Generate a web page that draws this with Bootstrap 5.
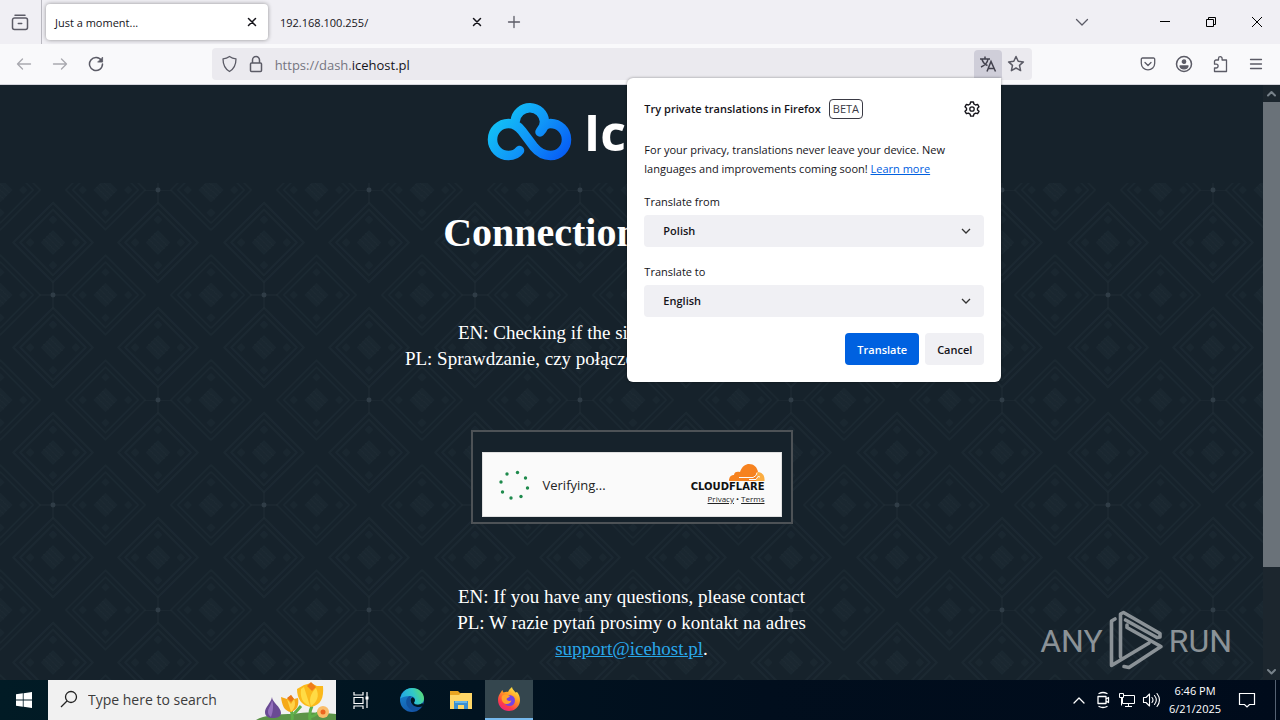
<!DOCTYPE html>
<html lang="en">
<head>
<meta charset="utf-8">
<meta name="viewport" content="width=device-width, initial-scale=1">
<title>Just a moment...</title>
<link href="https://cdn.jsdelivr.net/npm/bootstrap@5.3.0/dist/css/bootstrap.min.css" rel="stylesheet">
<style>
body { font: 11px/19px "Open Sans", "Noto Sans", sans-serif; color: #15141a; background: #16222b; }
button { font: inherit; color: inherit; background: none; border: 0; padding: 0; }
svg { display: block; flex: none; }
.ln { fill: none; stroke: currentColor; stroke-width: 1.3; stroke-linecap: round; stroke-linejoin: round; }
.ico { color: #5b5b66; }

/* tab strip */
.tabstrip { height: 44px; background: #f0eff4; }
.view-btn { width: 42px; padding-right: 2px; border-right: 1px solid #b9b8c0; }
.tab { width: 225px; height: 36px; padding: 0 8px 0 12px; }
.tab.current { width: 222px; padding: 0 8px 0 9px; background: #fff; border-radius: 4px; box-shadow: 0 0 4px rgba(0,0,0,.4); }
.tab-x, .tab-new { width: 16px; height: 16px; }
.tab-new { margin-left: 13px; }
.win-btn { width: 46px; height: 44px; }

/* toolbar */
.toolbar { height: 41px; background: #f9f9fb; border-bottom: 1px solid #d5d5dc; padding: 0 6px; }
.tool { width: 36px; height: 36px; }
.spring { flex: 12 1 0; }
.urlbar { flex: 100 1 0; min-width: 0; height: 32px; padding: 0 2px 0 5px; background: #ebeaef; border-radius: 4px; }
.url-field { font-size: 13px; line-height: 20px; padding: 2px 0 0 2px; color: #75757f; text-decoration: none; }
.url-field b { color: #15141a; font-weight: 400; }
.url-btn { width: 28px; height: 28px; }
.url-btn.open { background: #cfced9; border-radius: 4px 4px 0 0; }

/* translation panel */
.panel { position: absolute; top: 100%; right: 1px; z-index: 10; width: 374px; padding: 16px 17px 17px; background: #fff; border-radius: 6px 0 6px 6px; box-shadow: 0 0 3px rgba(0,0,0,.4); }
.panel-head { height: 30px; margin-bottom: 16px; }
.panel h2 { font-size: 11px; line-height: 20px; font-weight: 600; }
.beta { font-size: 11px; line-height: 18px; padding: 0 3px; border: 1px solid #3a3a44; border-radius: 4px; color: #3a3a44; }
.panel a { color: #0060df; }
.panel p { margin-bottom: 14px; }
.panel .field { margin-bottom: 15px; }
.panel .form-select { height: 32px; padding: 0 32px 0 15px; border: 0; border-radius: 4px; font-size: 11px; font-weight: 600; color: #15141a; background-color: #f0f0f4; background-position: right 12px center; background-size: 12px; background-image: url("data:image/svg+xml,%3Csvg xmlns='http://www.w3.org/2000/svg' viewBox='0 0 12 12'%3E%3Cpath d='M2 4l4 4 4-4' fill='none' stroke='%23333' stroke-width='1.3'/%3E%3C/svg%3E"); text-indent: 4px; }
.panel-actions { gap: 6px; padding-top: 1px; }
.panel-btn { height: 32px; padding: 0 12px; border-radius: 4px; background: #f0f0f4; font-weight: 600; }
.panel-btn.go { background: #0061e0; color: #fff; }

/* web page */
.site { color: #fff; font: 19px/26px "Liberation Serif", serif; background: #16222b; min-height: 0; }
.site-head { height: 98px; padding-top: 2px; }
.site-name { font: 700 50px/58px "Open Sans", sans-serif; padding-right: 8px; }
.site-body { padding-top: 27px; background: url("data:image/svg+xml,%3Csvg xmlns='http://www.w3.org/2000/svg' xmlns:xlink='http://www.w3.org/1999/xlink' viewBox='0 0 212 212'%3E%3Cdefs%3E%3Cg id='d'%3E%3Cg fill='none' stroke='%231b2831' stroke-width='1.5'%3E%3Cpath d='M0-40L40 0 0 40-40 0z'/%3E%3Cpath d='M0-33L33 0 0 33-33 0z'/%3E%3C/g%3E%3Cpath fill='%231a2730' d='M0-12L12 0 0 12-12 0zM0-27l4 4-4 4-4-4zM0 19l4 4-4 4-4-4zM-23-4l4 4-4 4-4-4zM23-4l4 4-4 4-4-4z'/%3E%3Cpath d='M-6-6L6 6M-9-3L3 9M-3-9L9 3' stroke='%23202d36' stroke-dasharray='1 1'/%3E%3C/g%3E%3Cg id='r'%3E%3Cuse xlink:href='%23d'/%3E%3Cuse xlink:href='%23d' x='106'/%3E%3Cuse xlink:href='%23d' x='212'/%3E%3C/g%3E%3C/defs%3E%3Cuse xlink:href='%23r'/%3E%3Cuse xlink:href='%23r' y='106'/%3E%3Cuse xlink:href='%23r' y='212'/%3E%3Cuse xlink:href='%23r' x='53' y='53'/%3E%3Cuse xlink:href='%23r' x='53' y='159'/%3E%3Cuse xlink:href='%23r' x='-53' y='53'/%3E%3Cuse xlink:href='%23r' x='-53' y='159'/%3E%3Cg stroke='%231f2c35'%3E%3Cpath d='M39 106h28M53 92v28M145 0h28M159 0v14M159 198v14'/%3E%3C/g%3E%3Cg fill='%232f3c46'%3E%3Ccircle cx='53' cy='106' r='2.5'/%3E%3Ccircle cx='159' cy='0' r='2.5'/%3E%3Ccircle cx='159' cy='212' r='2.5'/%3E%3C/g%3E%3C/svg%3E") 0 7px / 211px 210px; }
.site-body h1 { font-size: 40px; line-height: 46px; font-weight: 700; margin: 0 0 64px; }
.challenge { width: 322px; height: 94px; margin: 58px auto 60px; padding: 20px 9px 5px; border: 2px solid #4d5256; background: #16222b; }
.widget { height: 65px; background: #fafafa; border: 1px solid #e0e0e0; color: #232323; padding: 0 16px; font: 13px/20px "Open Sans", sans-serif; }
.cf-name { font: 700 10px/12px "DejaVu Sans", sans-serif; color: #111; }
.cf-links { font-size: 8px; line-height: 12px; }
.cf-links a { color: #232323; }
.site-body p a { color: #29a8ea; }
.watermark { position: absolute; right: 48px; bottom: 7px; color: #8b9297; font: 32px/62px Roboto, "Liberation Sans", sans-serif; gap: 4px; }

.scroll { width: 17px; background: #1c262e; color: #78828a; }
.scroll-thumb { height: 465px; background: #6a7279; }

/* taskbar */
.taskbar { height: 40px; color: #fff; background: linear-gradient(90deg, #011b25, #010e1d 60%, #000b1b); line-height: 18px; }
.start { width: 48px; }
.search { width: 288px; background: #f1f1f1; }
.search input { flex: 1; width: 100px; border: 0; background: none; font-size: 14px; padding: 0; outline: 0; }
.search input::placeholder { color: #3c3c3c; opacity: 1; }
.app { width: 49px; height: 40px; }
.app.view { width: 49px; margin-right: 2px; }
.app.running { width: 48px; background: #34464e; border-bottom: 2px solid #76b9ed; }
.tray-btn { width: 24px; height: 40px; }
.clock { width: 64px; }
.notify { width: 40px; height: 40px; }
.peek { width: 5px; border-left: 1px solid #566273; }
</style>
</head>
<body class="vh-100 d-flex flex-column overflow-hidden">

<header>
  <div class="tabstrip d-flex align-items-center">
    <button class="view-btn ico h-100 d-flex align-items-center justify-content-center" aria-label="Firefox View">
      <svg class="ln" width="18" height="18" viewBox="0 0 18 18"><path d="M4 2.200h10M3.500 5h11a2 2 0 0 1 2 2v7.500a2 2 0 0 1-2 2h-11a2 2 0 0 1-2-2V7a2 2 0 0 1 2-2zM7.300 10.500h3.400" stroke-width="1.5"/></svg>
    </button>
    <div class="tab current ms-1 d-flex align-items-center justify-content-between">
      <span>Just a moment...</span>
      <button class="tab-x" aria-label="Close tab"><svg class="ln" width="16" height="16" viewBox="0 0 16 16"><path d="M4.500 4.500l7 7M11.500 4.500l-7 7" stroke-width="1.5"/></svg></button>
    </div>
    <div class="tab d-flex align-items-center justify-content-between">
      <span>192.168.100.255/</span>
      <button class="tab-x" aria-label="Close tab"><svg class="ln" width="16" height="16" viewBox="0 0 16 16"><path d="M4.500 4.500l7 7M11.500 4.500l-7 7" stroke-width="1.5"/></svg></button>
    </div>
    <button class="tab-new ico me-auto" aria-label="New tab"><svg class="ln" width="16" height="16" viewBox="0 0 16 16"><path d="M8 2.500v11M2.500 8h11"/></svg></button>
    <button class="ico me-5 d-flex align-items-center" aria-label="List all tabs"><svg class="ln" width="24" height="16" viewBox="0 0 24 16"><path d="M6.500 5.500L12 11l5.500-5.500"/></svg></button>
    <button class="win-btn d-flex align-items-center justify-content-center" aria-label="Minimize"><svg width="12" height="12" viewBox="0 0 12 12"><path d="M1 5.500h10" stroke="#000"/></svg></button>
    <button class="win-btn d-flex align-items-center justify-content-center" aria-label="Restore"><svg width="12" height="12" viewBox="0 0 12 12" fill="none" stroke="#000"><path d="M1.500 3.500h7v7h-7zM3.500 3.500v-2h7v7h-2"/></svg></button>
    <button class="win-btn d-flex align-items-center justify-content-center" aria-label="Close"><svg width="12" height="12" viewBox="0 0 12 12"><path d="M1 1l10 10M11 1L1 11" stroke="#000"/></svg></button>
  </div>

  <nav class="toolbar d-flex align-items-center" aria-label="Navigation">
    <button class="tool ico opacity-50 d-flex align-items-center justify-content-center" aria-label="Back"><svg class="ln" width="16" height="16" viewBox="0 0 16 16"><path d="M14.500 8h-13M6.500 3L1.500 8l5 5"/></svg></button>
    <button class="tool ico opacity-50 d-flex align-items-center justify-content-center" aria-label="Forward"><svg class="ln" width="16" height="16" viewBox="0 0 16 16"><path d="M1.500 8h13M9.500 3l5 5-5 5"/></svg></button>
    <button class="tool ico d-flex align-items-center justify-content-center" aria-label="Reload"><svg class="ln" width="16" height="16" viewBox="0 0 16 16"><path d="M13.500 4.600A6.500 6.500 0 1 0 14.500 8" stroke-width="1.5"/><path d="M14.600 1.500v4.600h-4.600z" fill="currentColor" stroke-width=".8"/></svg></button>
    <div class="spring"></div>
    <div class="urlbar d-flex align-items-center">
      <div class="d-flex align-items-center ico ps-1 pe-2 gap-2">
        <svg class="ln" width="18" height="18" viewBox="0 0 18 18"><path d="M8.500 1.500c2 1.500 4 2.200 6.500 2.300 0 6-2 10.200-6.500 12.700C4 14 2 9.800 2 3.800c2.500-.1 4.500-.8 6.500-2.300z"/></svg>
        <svg class="ln" width="18" height="18" viewBox="0 0 18 18"><path d="M4.500 8h9a1 1 0 0 1 1 1v6.500a1 1 0 0 1-1 1h-9a1 1 0 0 1-1-1V9a1 1 0 0 1 1-1zM5.500 8V5a3.500 3.500 0 0 1 7 0v3" stroke-width="1.5"/></svg>
      </div>
      <a class="url-field me-auto" href="https://dash.icehost.pl">https://dash.<b>icehost.pl</b></a>
      <div class="position-relative">
        <button class="url-btn open d-flex align-items-center justify-content-center" aria-label="Translate this page">
          <svg width="18" height="18" viewBox="0 0 18 18" fill="none" stroke="#42414d" stroke-width="1.500"><path d="M1 4h10M6 1.500V4M9 4C8.500 7.500 5.500 10.500 2 12M3 4.500C4 7.500 6 9.500 8.500 10.500M8 16.500l4-10 4.500 10M9.500 13.500h5.500"/></svg>
        </button>
        <section class="panel" aria-label="Translations">
          <div class="panel-head d-flex align-items-center pe-1">
            <h2 class="mb-0 me-2">Try private translations in Firefox</h2>
            <span class="beta">BETA</span>
            <button class="ms-auto" aria-label="Translation settings"><svg class="ln" width="16" height="16" viewBox="0 0 16 16"><path d="M6.600 1h2.800l.5 2 1.700 1 2-.6 1.400 2.400L13.500 7.200v1.700l1.500 1.400-1.400 2.400-2-.6-1.700 1-.5 2H6.600l-.5-2-1.700-1-2 .6L1 10.300l1.500-1.400V7.200L1 5.800l1.400-2.400 2 .6 1.700-1z" stroke-width="1.400"/><circle cx="8" cy="8" r="2.200"/></svg></button>
          </div>
          <p>For your privacy, translations never leave your device. New<br>languages and improvements coming soon! <a href="#">Learn more</a></p>
          <div class="field">
            <label class="d-block mb-1" for="from">Translate from</label>
            <select class="form-select" id="from"><option>Polish</option></select>
          </div>
          <div class="field">
            <label class="d-block mb-1" for="to">Translate to</label>
            <select class="form-select" id="to"><option>English</option></select>
          </div>
          <div class="panel-actions d-flex justify-content-end">
            <button class="panel-btn go">Translate</button>
            <button class="panel-btn">Cancel</button>
          </div>
        </section>
      </div>
      <button class="url-btn ico d-flex align-items-center justify-content-center" aria-label="Bookmark this page"><svg class="ln" width="18" height="18" viewBox="0 0 18 18"><path d="M9 1.500l2.200 4.800 5.200.6-3.900 3.500 1.100 5.200L9 13l-4.600 2.600 1.100-5.200L1.600 6.900l5.200-.6z" stroke-width="1.500"/></svg></button>
    </div>
    <div class="spring"></div>
    <button class="tool ico d-flex align-items-center justify-content-center" aria-label="Save to Pocket"><svg class="ln" width="16" height="16" viewBox="0 0 16 16"><path d="M2.500 2h11a1.200 1.200 0 0 1 1.200 1.200v4a6.700 6.700 0 0 1-13.400 0v-4A1.200 1.200 0 0 1 2.500 2zM5 6.500l3 3 3-3"/></svg></button>
    <button class="tool ico d-flex align-items-center justify-content-center" aria-label="Account"><svg class="ln" width="18" height="18" viewBox="0 0 18 18"><circle cx="9" cy="9" r="7.500" stroke-width="1.500"/><circle cx="9" cy="6.700" r="1.700" fill="currentColor"/><path d="M5 11h8c-.5 1.700-2.100 2.800-4 2.800S5.500 12.700 5 11z" fill="currentColor"/></svg></button>
    <button class="tool ico d-flex align-items-center justify-content-center" aria-label="Extensions"><svg class="ln" width="18" height="18" viewBox="0 0 18 18"><path d="M7.500 5V3.500a1.800 1.800 0 0 1 3.600 0V5h4.400v11.500H3.500V13h1.700a1.900 1.900 0 0 0 0-3.800H3.500V6.500a1.500 1.500 0 0 1 1.500-1.500z"/></svg></button>
    <button class="tool ico d-flex align-items-center justify-content-center" aria-label="Menu"><svg class="ln" width="16" height="16" viewBox="0 0 16 16"><path d="M2.500 3.500h11M2.500 8h11M2.500 12.500h11"/></svg></button>
  </nav>
</header>

<div class="site flex-grow-1 d-flex position-relative">
  <main class="flex-grow-1 d-flex flex-column text-center overflow-hidden">
    <div class="site-head d-flex justify-content-center gap-2">
      <svg width="92" height="88" viewBox="0 0 92 88" fill="none"><defs><linearGradient id="ice" gradientUnits="userSpaceOnUse" x1="20" y1="20" x2="78" y2="70"><stop stop-color="#12c3f5"/><stop offset=".5" stop-color="#1097f8"/><stop offset="1" stop-color="#075ff5"/></linearGradient></defs>
        <path d="M35.500 63.500C33 67 29 68.500 24.500 68.500A16 16 0 0 1 24.500 36.500C31 36.500 35 40 38 44L50 60C55 66 60 68.500 66.500 68.500A16 16 0 0 0 66.500 36.500C62 36.500 59 39 56.500 44M56 45C59 42 60.500 39 60.500 34.500A14.700 14.700 0 0 0 31.200 34" stroke="url(#ice)" stroke-width="9.500" stroke-linecap="round" stroke-linejoin="round"/>
      </svg>
      <span class="site-name pt-3">IceHost</span>
    </div>
    <div class="site-body flex-grow-1">
      <h1>Connection validation</h1>
      <p class="mb-0">EN: Checking if the site connection is secure.<br>PL: Sprawdzanie, czy połączenie z witryną jest bezpieczne.</p>
      <div class="challenge">
        <div class="widget d-flex align-items-center">
          <svg width="32" height="32" viewBox="0 0 32 32" fill="#1e8a4c"><circle cx="18.500" cy="3.500" r="1.700"/><circle cx="26.500" cy="9" r="1.700"/><circle cx="28.500" cy="19" r="1.700"/><circle cx="22" cy="27.500" r="1.700"/><circle cx="12" cy="29" r="1.700"/><circle cx="3.500" cy="23" r="1.700"/><circle cx="2" cy="13" r="1.700"/><circle cx="8" cy="5" r="1.700"/></svg>
          <span class="ms-2 ps-1">Verifying...</span>
          <div class="ms-auto text-end d-flex flex-column align-items-end">
            <svg width="36" height="17" viewBox="0 0 36 17"><path fill="#f6821f" d="M0 17c0-4 2-6 5-6 0-3 3-4 6-3C13 2 17 0 20 0c5 0 8 3 9 8 1 3 0 6-1 9z"/><path fill="#fbad41" d="M27 17c1-3 1-6 1-9 5 0 8 3 7.500 9z"/><path d="M10 13.500h14l3-2 1-3M20 15.500h7l2-3 2 .5" fill="none" stroke="#fafafa" stroke-width="1"/></svg>
            <span class="cf-name">CLOUDFLARE</span>
            <span class="cf-links"><a href="#">Privacy</a> • <a href="#">Terms</a></span>
          </div>
        </div>
      </div>
      <p class="mb-0">EN: If you have any questions, please contact<br>PL: W razie pytań prosimy o kontakt na adres<br><a href="mailto:support@icehost.pl">support@icehost.pl</a>.</p>
    </div>
  </main>
  <div class="scroll d-flex flex-column align-items-center" aria-hidden="true">
    <svg class="ln" width="17" height="17" viewBox="0 0 17 17"><path d="M5 10.500L8.500 7l3.500 3.500" stroke-width="2"/></svg>
    <div class="scroll-thumb w-100"></div>
    <svg class="ln mt-auto" width="17" height="17" viewBox="0 0 17 17"><path d="M5 7l3.500 3.500L12 7" stroke-width="2"/></svg>
  </div>
  <div class="watermark d-flex align-items-center">
    <span>ANY</span>
    <svg width="58" height="64" viewBox="0 0 58 64" fill="none" stroke="#8b9297" stroke-width="3.600" stroke-linecap="round" stroke-linejoin="round"><path d="M8 10l-3.500 2v44.500L42 34M13.500 48V5l3-1.500L53 24.500v3.500l-3 .500L18.500 11M20 18.500l34 19L22 58.500l-5-1M20 18.500V16"/></svg>
    <span>RUN</span>
  </div>
</div>

<footer class="taskbar d-flex align-items-stretch">
  <button class="start d-flex align-items-center justify-content-center" aria-label="Start"><svg width="16" height="16" viewBox="0 0 16 16" fill="#fff"><path d="M0 2.300l6.800-1v6.300H0zM7.600 1.200L16 0v7.600H7.600zM0 8.400h6.800v6.300L0 13.700zM7.600 8.400H16V16l-8.400-1.200z"/></svg></button>
  <label class="search d-flex align-items-center ps-2">
    <svg class="ms-1 me-2" width="20" height="20" viewBox="0 0 20 20" fill="none" stroke="#222" stroke-width="1.300"><circle cx="11" cy="7" r="5.500"/><path d="M7 11l-6 6"/></svg>
    <input type="text" placeholder="Type here to search" aria-label="Search">
    <svg class="align-self-end" width="80" height="38" viewBox="0 0 80 38"><path fill="#5c9448" d="M0 38c8-5 22-6 38-6 15-3 30-1 42 0v6z"/><g stroke="#5faf4a" stroke-width="3" fill="none"><path d="M36 38c1-4 0-8-2-12M54 38c-1-6 0-10 2-14M54 35c7-2 10-5 11-9M38 32l7-8"/></g><path fill="#6a4a94" d="M16 15c0 5 9 10 9 16 0 4-4 5-8 5-5 0-8-2-8-6 0-5 6-9 7-15z"/><path fill="#9470bd" d="M16 18c-1 6-4 8-4 12 0 3 2 4 3 5 2-5 3-12 1-17z"/><path fill="#f5a917" d="M25 15l6 2 4-4 3 4 4-1c1 6 0 12-7 14-7-1-9-7-10-15z"/><path fill="#ffd34a" d="M31 17l4 13c4-4 5-8 3-13l-3 5z"/><path fill="#e97518" d="M31 16l4-3 3 4-3 3z"/><path fill="#fbb91c" d="M41 7l7-4 7-2 6 3 6 0c1 12-2 19-12 21-9-1-14-8-14-18z"/><path fill="#ffdb45" d="M48 5l6 19c-8-3-10-9-9-17zM60 6c4 8 1 14-5 18-2-6-1-12 5-18z"/><path fill="#ef7c19" d="M51 4l4-4 5 5-4 4z"/><circle cx="67" cy="30" r="6" fill="#f9bd6a"/><circle cx="67" cy="30" r="2.500" fill="#ec651f"/></svg>
  </label>
  <button class="app view d-flex align-items-center justify-content-center" aria-label="Task View"><svg width="18" height="18" viewBox="0 0 18 18" fill="none" stroke="#fff" stroke-width="1.200"><path d="M2 1v3h9V1M2 6.500h9v6H2zM2 18v-3h9v3M15 1v16"/><path d="M13.500 5.500h3v3h-3z" fill="#fff" stroke="none"/></svg></button>
  <button class="app d-flex align-items-center justify-content-center" aria-label="Microsoft Edge"><svg width="24" height="24" viewBox="0 0 24 24"><defs><linearGradient id="e1" x1="0" x2="1" y1=".3"><stop stop-color="#24a9e3"/><stop offset=".5" stop-color="#31c8c8"/><stop offset="1" stop-color="#66e05c"/></linearGradient><linearGradient id="e2" y2="1" x2=".6"><stop stop-color="#168bd4"/><stop offset="1" stop-color="#1554a8"/></linearGradient></defs><circle cx="12" cy="12" r="12" fill="url(#e2)"/><path fill="url(#e1)" d="M.2 10.500C2 4 6.500 0 12 0c7 0 12 5 12 10.500 0 4-3 6.200-6 6.200-3.500 0-4.700-1.500-3.500-3 1.800-2.800-.8-5.700-5-5.700-4 0-7 1-9.300 2.500z"/><path fill="#12529e" d="M9.500 8C6 10 5 15 8 19c2 2.800 5 4 8 3.500 3-.8 5-3 6-5-6 2.500-12-.5-12-5.500 0-1.500.5-3 1.800-3.500z"/><path fill="#011722" d="M14.500 13.800c-1.200 1.400 0 2.900 3.500 2.900 1.500 0 3-.5 4.200-1.400 1.200.5 1 2.200.5 3-3.500 1.700-11 .7-12-5.300-.4-2 .8-3.500 2-3.800 2 1 2.800 3 1.800 4.600z"/></svg></button>
  <button class="app d-flex align-items-center justify-content-center" aria-label="File Explorer"><svg width="22" height="20" viewBox="0 0 22 20"><path fill="#e9a522" d="M0 1h8l2 2h12v5H0z"/><path fill="#ffd767" d="M0 5h9l2-2h11v16H0z"/><path fill="#3c8fd0" d="M4 11h14v8h-4v-4H8v4H4z"/><path fill="#68b7ea" d="M5 11h12v2H5z"/></svg></button>
  <button class="app running d-flex align-items-center justify-content-center" aria-label="Firefox"><svg width="24" height="24" viewBox="0 0 24 24"><defs><linearGradient id="ff" x1=".8" y1="0" x2=".2" y2="1"><stop stop-color="#fff04a"/><stop offset=".4" stop-color="#ff9a24"/><stop offset=".75" stop-color="#ff3d48"/><stop offset="1" stop-color="#e82089"/></linearGradient></defs><path fill="url(#ff)" d="M4 5c.5-1 1-1.500 1.500-2 0 1 .3 1.800 1 2.500C8 5 9.500 4.500 11 5c1-2 2-3.500 4-5 .2 2 2 3.500 3.500 5.500L20 5c3 3.500 3.700 8 2.300 12-1.700 4.200-5.600 7-10.300 7C6 24 1 19.500 1 13c0-3 1-5.500 3-8z"/><circle cx="12.500" cy="13.500" r="5.500" fill="#7543e5"/><path fill="#ffa32b" d="M5 9c2-2 5-2 8 0-1 2-3 1.500-3.500 3 .5 2 3 2.500 5 1.500-1 3-4 4.500-7 3C5 15 4 12 5 9z"/></svg></button>

  <button class="tray-btn ms-auto d-flex align-items-center justify-content-center" aria-label="Show hidden icons"><svg class="ln" width="14" height="14" viewBox="0 0 14 14"><path d="M2 10l5-5 5 5"/></svg></button>
  <button class="tray-btn d-flex align-items-center justify-content-center" aria-label="Camera"><svg class="ln" width="16" height="18" viewBox="0 0 16 18"><path d="M4 2.500c3-1.500 5-1.500 8 0M4 15.500c3 1.500 5 1.500 8 0M3 5.500h8v7H3zM11 8l2.500-1.500v5L11 10z"/></svg></button>
  <button class="tray-btn d-flex align-items-center justify-content-center" aria-label="Network"><svg width="18" height="16" viewBox="0 0 18 16" fill="none" stroke="#fff"><path d="M6 3.500h10.500v8H4.500V6M10.500 11.500v3M7 14.500h7M1.500 1.500h4v4h-4zM3.500 5.500v8"/></svg></button>
  <button class="tray-btn d-flex align-items-center justify-content-center" aria-label="Volume"><svg class="ln" width="18" height="16" viewBox="0 0 18 16"><path d="M1.500 5.500h2.500L7.500 2v12L4 10.500H1.500zM10 5.500c1.200 1.500 1.200 3.500 0 5M12.500 3.500c2.200 2.700 2.200 6.300 0 9M15 1.500c3 4 3 9 0 13" stroke-width="1.100"/></svg></button>
  <div class="clock text-center align-self-center"><div>6:46 PM</div><div>6/21/2025</div></div>
  <button class="notify d-flex align-items-center justify-content-center" aria-label="Notifications"><svg width="18" height="18" viewBox="0 0 18 18" fill="none" stroke="#fff" stroke-width="1.200"><path d="M1.500 2.500h15v11h-5L9 16l-2.500-2.500h-5z"/></svg></button>
  <div class="peek ms-2"></div>
</footer>

<script src="https://cdn.jsdelivr.net/npm/bootstrap@5.3.0/dist/js/bootstrap.bundle.min.js"></script>
</body>
</html>
